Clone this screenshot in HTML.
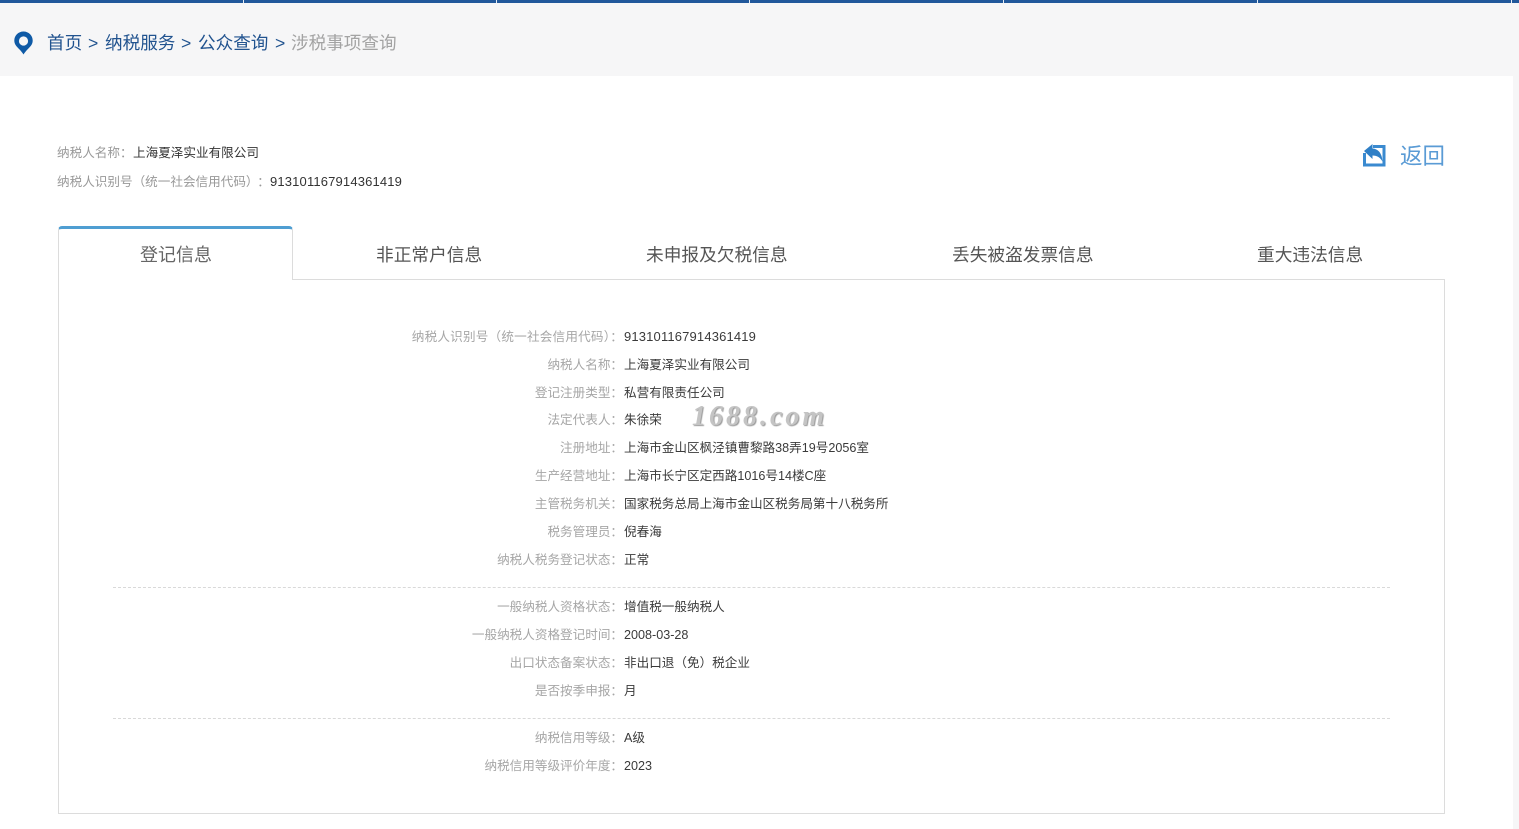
<!DOCTYPE html>
<html lang="zh-CN"><head><meta charset="utf-8"><title>涉税事项查询</title>
<style>
html,body{margin:0;padding:0;width:1519px;height:829px;overflow:hidden;background:#f6f6f7}
body{position:relative;font-family:"Liberation Sans","Noto Sans CJK SC",sans-serif;font-size:12.6px;color:#333}
.a{position:absolute;white-space:nowrap}
.bar{left:0;top:0;width:1519px;height:3px;background:#21589b}
.sep{top:0;width:1px;height:3px;background:#e8eef5}
.main{left:0;top:76px;width:1513px;height:753px;background:#fff}
.bc{top:30px;height:26px;line-height:26px;font-size:17.6px;color:#21538f}
.l{left:200px;width:423px;text-align:right;color:#a6a6a6;height:20px;line-height:20px}
.v{left:624px;color:#3a3a3a;height:20px;line-height:20px}
.n{font-size:13px;letter-spacing:.16px}
.t{top:242px;height:26px;line-height:26px;font-size:17.7px;color:#555}
.dash{left:113px;width:1277px;height:0;border-top:1px dashed #d9d9d9}
</style></head><body>
<div class="a bar"></div>
<div class="a sep" style="left:243px"></div><div class="a sep" style="left:496px"></div><div class="a sep" style="left:749px"></div><div class="a sep" style="left:1003px"></div><div class="a sep" style="left:1257px"></div><div class="a sep" style="left:1511px"></div>
<div class="a main"></div>

<svg class="a" style="left:14px;top:31px" width="20" height="24" viewBox="0 0 20 24"><path d="M9.5 0.5C4.4 0.5 0.3 4.5 0.3 9.6c0 4.2 3.2 6.7 5.5 9.2 1.4 1.5 2.7 3.2 3.7 4.7 1-1.5 2.3-3.2 3.7-4.7 2.3-2.500 5.500-5 5.500-9.200C18.700 4.500 14.600 0.500 9.500 0.500z" fill="#0f5aa6"/><circle cx="9.500" cy="10" r="4.600" fill="#f6f6f7"/></svg>
<div class="a bc" style="left:47px">首页</div>
<div class="a bc" style="left:88px">&gt;</div>
<div class="a bc" style="left:105px">纳税服务</div>
<div class="a bc" style="left:181px">&gt;</div>
<div class="a bc" style="left:198px">公众查询</div>
<div class="a bc" style="left:275px">&gt;</div>
<div class="a bc" style="left:291px;color:#a3a3a3">涉税事项查询</div>

<div class="a" style="left:57px;top:143px;height:20px;line-height:20px;color:#999">纳税人名称：</div>
<div class="a" style="left:133px;top:143px;height:20px;line-height:20px;color:#333">上海夏泽实业有限公司</div>
<div class="a" style="left:57px;top:172px;height:20px;line-height:20px;color:#999">纳税人识别号（统一社会信用代码）<span style="margin-left:5px">：</span></div>
<div class="a n" style="left:270px;top:172px;height:20px;line-height:20px;color:#333">913101167914361419</div>

<svg class="a" style="left:1362px;top:143px" width="24" height="24" viewBox="0 0 24 24"><path d="M1 10h3v10.500h16.500V5H11V2h12.500v21.500H1z" fill="#3a8ad0"/><path d="M2 8 10.500 1v4.500c5.500.3 9.500 4.500 10 13-2.300-4-5.300-6-10-6V16z" fill="#2f7fc6"/></svg>
<div class="a" style="left:1400px;top:143px;height:28px;line-height:28px;font-size:22.5px;color:#5a9bd5">返回</div>

<div class="a" style="left:58px;top:279px;width:1385px;height:533px;border:1px solid #dcdcdc;background:#fff"></div>
<div class="a" style="left:58px;top:226px;width:233px;height:51px;border:1px solid #dcdcdc;border-top:3px solid #4f9ed2;border-bottom:0;border-radius:4px 4px 0 0;background:#fff"></div>
<div class="a" style="left:59px;top:279px;width:233px;height:1px;background:#fff"></div>
<div class="a t" style="left:140px;font-size:18px;color:#666">登记信息</div>
<div class="a t" style="left:376px">非正常户信息</div>
<div class="a t" style="left:646px">未申报及欠税信息</div>
<div class="a t" style="left:952px">丢失被盗发票信息</div>
<div class="a t" style="left:1257px">重大违法信息</div>

<div class="a l" style="top:327px;letter-spacing:.2px">纳税人识别号（统一社会信用代码）：</div><div class="a v n" style="top:327px">913101167914361419</div>
<div class="a l" style="top:355px">纳税人名称：</div><div class="a v" style="top:355px">上海夏泽实业有限公司</div>
<div class="a l" style="top:383px">登记注册类型：</div><div class="a v" style="top:383px">私营有限责任公司</div>
<div class="a l" style="top:410px">法定代表人：</div><div class="a v" style="top:410px">朱徐荣</div>
<div class="a l" style="top:438px">注册地址：</div><div class="a v" style="top:438px">上海市金山区枫泾镇曹黎路38弄19号2056室</div>
<div class="a l" style="top:466px">生产经营地址：</div><div class="a v" style="top:466px">上海市长宁区定西路1016号14楼C座</div>
<div class="a l" style="top:494px">主管税务机关：</div><div class="a v" style="top:494px">国家税务总局上海市金山区税务局第十八税务所</div>
<div class="a l" style="top:522px">税务管理员：</div><div class="a v" style="top:522px">倪春海</div>
<div class="a l" style="top:550px">纳税人税务登记状态：</div><div class="a v" style="top:550px">正常</div>

<div class="a" style="left:692px;top:402px;height:30px;line-height:30px;font-family:'Liberation Serif',serif;font-style:italic;font-weight:bold;font-size:28px;letter-spacing:3px;color:#c4c4c4;text-shadow:1px 1px 1px #999">1688.com</div>

<div class="a dash" style="top:587px"></div>
<div class="a l" style="top:597px">一般纳税人资格状态：</div><div class="a v" style="top:597px">增值税一般纳税人</div>
<div class="a l" style="top:625px">一般纳税人资格登记时间：</div><div class="a v" style="top:625px">2008-03-28</div>
<div class="a l" style="top:653px">出口状态备案状态：</div><div class="a v" style="top:653px">非出口退（免）税企业</div>
<div class="a l" style="top:681px">是否按季申报：</div><div class="a v" style="top:681px">月</div>
<div class="a dash" style="top:718px"></div>
<div class="a l" style="top:728px">纳税信用等级：</div><div class="a v" style="top:728px">A级</div>
<div class="a l" style="top:756px">纳税信用等级评价年度：</div><div class="a v" style="top:756px">2023</div>
</body></html>
